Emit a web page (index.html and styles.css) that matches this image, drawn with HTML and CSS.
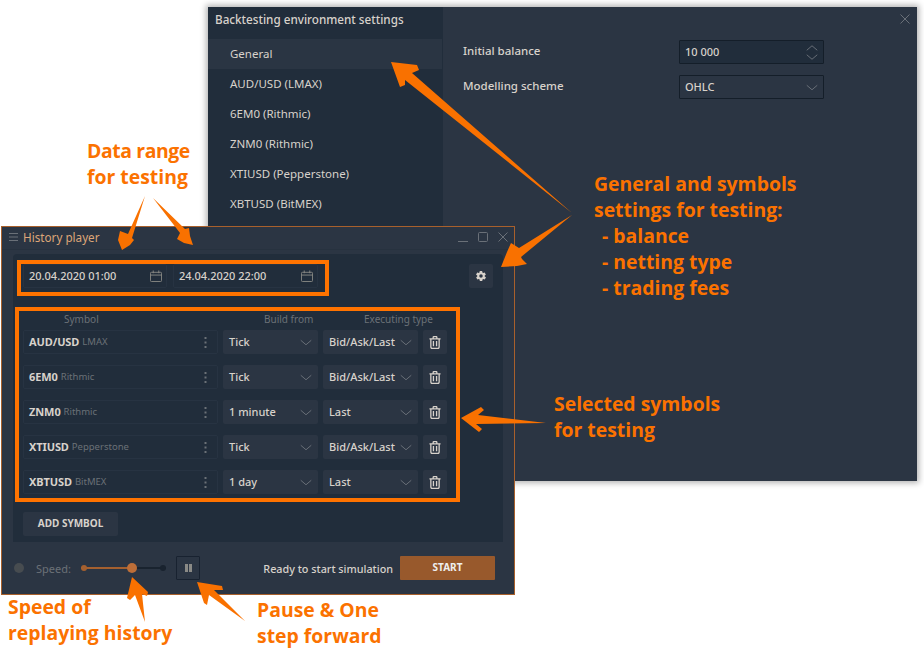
FILE: index.html
```html
<!DOCTYPE html>
<html lang="en">
<head>
  <meta charset="UTF-8" />
  <title>History player</title>
  <link rel="stylesheet" href="styles.css">
</head>
<body>
  <svg class="defs" width="0" height="0">
    <symbol id="chev" viewBox="0 0 16 8"><path d="M1 1l7 6 7-6" fill="none" stroke="currentColor" stroke-width="1.3"/></symbol>
    <symbol id="cal" viewBox="0 0 13 13"><path d="M1.500 2.500h10a1 1 0 0 1 1 1v8a1 1 0 0 1-1 1h-10a1 1 0 0 1-1-1v-8a1 1 0 0 1 1-1zM.5 5.500h12M3.500 .5v3M9.500 .5v3" fill="none" stroke="currentColor"/></symbol>
    <symbol id="trash" viewBox="0 0 13 14"><path d="M.5 3h12M4.500 3V1.500a1 1 0 0 1 1-1h2a1 1 0 0 1 1 1V3M2 3v9a1.500 1.500 0 0 0 1.500 1.500h6A1.500 1.500 0 0 0 11 12V3M4.800 5.500v5.500M8.200 5.500v5.500" fill="none" stroke="currentColor" stroke-width="1.4"/></symbol>
    <symbol id="dots" viewBox="0 0 3 11"><path d="M.5 0h2v2h-2zM.5 4.500h2v2h-2zM.5 9h2v2h-2z" fill="currentColor"/></symbol>
  </svg>

  <div class="desk">

    <!-- settings window -->
    <section class="win settings">
      <aside class="side">
        <h1 class="side-title">Backtesting environment settings</h1>
        <div class="side-item active">General</div>
        <div class="side-item">AUD/USD (LMAX)</div>
        <div class="side-item">6EM0 (Rithmic)</div>
        <div class="side-item">ZNM0 (Rithmic)</div>
        <div class="side-item">XTIUSD (Pepperstone)</div>
        <div class="side-item">XBTUSD (BitMEX)</div>
      </aside>
      <div class="main">
        <svg class="main-close" width="10" height="10" viewBox="0 0 10 10"><path d="M.5 .5l9 9M9.500 .5l-9 9" stroke="currentColor" fill="none"/></svg>
        <div class="field">
          <label class="field-label">Initial balance</label>
          <div class="box filled">10 000
            <span class="spin">
              <svg width="12" height="6" viewBox="0 0 16 8"><path d="M1 7l7-6 7 6" fill="none" stroke="currentColor" stroke-width="1.300"/></svg>
              <svg width="12" height="6"><use href="#chev"/></svg>
            </span>
          </div>
        </div>
        <div class="field">
          <label class="field-label">Modelling scheme</label>
          <div class="box">OHLC <svg class="chev" width="12" height="7"><use href="#chev"/></svg></div>
        </div>
      </div>
    </section>

    <!-- history player window -->
    <section class="win player">
      <header class="titlebar">
        <svg class="burger" width="9" height="8" viewBox="0 0 9 8"><path d="M0 .5h9M0 4h9M0 7.500h9" stroke="currentColor"/></svg>
        <span class="title">History player</span>
        <span class="ctrls">
          <svg width="10" height="10" viewBox="0 0 10 10"><path d="M0 9.500h10" stroke="currentColor"/></svg>
          <svg width="10" height="10" viewBox="0 0 10 10"><rect x=".5" y=".5" width="9" height="9" rx="1" fill="none" stroke="currentColor"/></svg>
          <svg width="10" height="10" viewBox="0 0 10 10"><path d="M.5 .5l9 9M9.500 .5l-9 9" stroke="currentColor" fill="none"/></svg>
        </span>
      </header>

      <div class="panel">
        <div class="dates">
          <div class="date">20.04.2020 01:00 <svg class="cal" width="12" height="12"><use href="#cal"/></svg></div>
          <div class="date date-to">24.04.2020 22:00 <svg class="cal" width="12" height="12"><use href="#cal"/></svg></div>
          <div class="gear">
            <svg width="12" height="12" viewBox="0 0 24 24"><path fill="currentColor" fill-rule="evenodd" d="M19.400 13c.1-.3.100-.7.100-1s0-.7-.1-1l2.100-1.600c.2-.2.200-.4.100-.6l-2-3.500c-.1-.2-.4-.3-.6-.2l-2.500 1c-.5-.4-1.100-.7-1.700-1l-.4-2.700c0-.2-.2-.4-.5-.4h-4c-.3 0-.5.200-.5.400l-.4 2.700c-.6.300-1.200.6-1.700 1l-2.500-1c-.2-.1-.5 0-.6.200l-2 3.500c-.1.200-.1.400.1.600L4.600 11c-.1.300-.1.700-.1 1s0 .7.100 1l-2.100 1.600c-.2.200-.2.400-.1.600l2 3.500c.1.200.4.300.6.200l2.500-1c.5.400 1.100.7 1.700 1l.4 2.700c0 .2.200.4.500.4h4c.3 0 .5-.2.500-.4l.4-2.700c.6-.3 1.200-.6 1.700-1l2.500 1c.2.100.5 0 .6-.2l2-3.500c.1-.2.100-.4-.1-.6zM12 15.500a3.500 3.500 0 1 1 0-7 3.500 3.500 0 0 1 0 7z"/></svg>
          </div>
        </div>

        <div class="grid heads">
          <span class="head">Symbol</span>
          <span class="head">Build from</span>
          <span class="head">Executing type</span>
        </div>

        <div class="grid row">
          <div class="sym"><b>AUD/USD</b><small>LMAX</small><svg class="dots" width="3" height="11"><use href="#dots"/></svg></div>
          <div class="sel">Tick<svg class="chev" width="12" height="7"><use href="#chev"/></svg></div>
          <div class="sel">Bid/Ask/Last<svg class="chev" width="12" height="7"><use href="#chev"/></svg></div>
          <div class="del"><svg width="12" height="13"><use href="#trash"/></svg></div>
        </div>
        <div class="grid row">
          <div class="sym"><b>6EM0</b><small>Rithmic</small><svg class="dots" width="3" height="11"><use href="#dots"/></svg></div>
          <div class="sel">Tick<svg class="chev" width="12" height="7"><use href="#chev"/></svg></div>
          <div class="sel">Bid/Ask/Last<svg class="chev" width="12" height="7"><use href="#chev"/></svg></div>
          <div class="del"><svg width="12" height="13"><use href="#trash"/></svg></div>
        </div>
        <div class="grid row">
          <div class="sym"><b>ZNM0</b><small>Rithmic</small><svg class="dots" width="3" height="11"><use href="#dots"/></svg></div>
          <div class="sel">1 minute<svg class="chev" width="12" height="7"><use href="#chev"/></svg></div>
          <div class="sel">Last<svg class="chev" width="12" height="7"><use href="#chev"/></svg></div>
          <div class="del"><svg width="12" height="13"><use href="#trash"/></svg></div>
        </div>
        <div class="grid row">
          <div class="sym"><b>XTIUSD</b><small>Pepperstone</small><svg class="dots" width="3" height="11"><use href="#dots"/></svg></div>
          <div class="sel">Tick<svg class="chev" width="12" height="7"><use href="#chev"/></svg></div>
          <div class="sel">Bid/Ask/Last<svg class="chev" width="12" height="7"><use href="#chev"/></svg></div>
          <div class="del"><svg width="12" height="13"><use href="#trash"/></svg></div>
        </div>
        <div class="grid row">
          <div class="sym"><b>XBTUSD</b><small>BitMEX</small><svg class="dots" width="3" height="11"><use href="#dots"/></svg></div>
          <div class="sel">1 day<svg class="chev" width="12" height="7"><use href="#chev"/></svg></div>
          <div class="sel">Last<svg class="chev" width="12" height="7"><use href="#chev"/></svg></div>
          <div class="del"><svg width="12" height="13"><use href="#trash"/></svg></div>
        </div>

        <div class="add">ADD SYMBOL</div>
      </div>

      <footer class="bottom">
        <span class="led"></span>
        <span class="speed">Speed:</span>
        <div class="slider"><span class="fill"></span><span class="knob"></span></div>
        <div class="pause"><svg width="7" height="8" viewBox="0 0 7 8"><path d="M0 0h3v8H0zM4 0h3v8H4z" fill="currentColor"/></svg></div>
        <span class="ready">Ready to start simulation</span>
        <div class="start">START</div>
      </footer>
    </section>

    <!-- orange annotations over the windows -->
    <div class="mark mark-dates"></div>
    <div class="mark mark-rows"></div>

    <svg class="arrows" width="924" height="654" viewBox="0 0 924 654">
      <path d="M391 62 417 65 419 70 412 73 572 213 405 80 405 85 400 87Z"/>
      <path d="M572 215 519 248 511 243 507 252 501 267 517 266 527 264 522 259 521 257Z"/>
      <path d="M461 418 481 407 484 410 478 415 546 423 476 424 482 429 479 432Z"/>
      <path d="M145 196 128 234 120 231 118 240 122 250 130 245 134 240 132 238Z"/>
      <path d="M153 198 185 229 189 228 190 236 193 245 184 243 177 239 180 233Z"/>
      <path d="M132 577 148 592 147 596 142 594 145 622 135 595 130 600 127 598Z"/>
      <path d="M197 582 222 586 223 590 214 590 245 621 209 595 207 605 204 603Z"/>
    </svg>

    <div class="note note-range"><span class="tight">Data range</span><br>for testing</div>
    <div class="note note-general">General and symbols<br>settings for testing:<br><span class="dash">- balance</span><br><span class="dash">- netting type</span><br><span class="dash">- trading fees</span></div>
    <div class="note note-selected">Selected symbols<br>for testing</div>
    <div class="note note-speed">Speed of<br>replaying history</div>
    <div class="note note-pause">Pause &amp; One<br>step forward</div>
  </div>
</body>
</html>
```

FILE: styles.css
```css
* { box-sizing: border-box; }
body { margin: 0; background: #fff; font-family: "Noto Sans", "Open Sans", sans-serif; font-size: 11px; color: #d8d2cb; }
.defs { position: absolute; }
.desk { position: relative; width: 924px; height: 654px; overflow: hidden; background: #fff; }
.win { position: absolute; display: flex; }

/* settings */
.settings { left: 208px; top: 7px; width: 709px; height: 474px; background: #2b3543; box-shadow: 0 0 6px 2px rgba(0,0,0,.3); }
.side { width: 235px; background: #212d3b; flex: none; }
.side-title { margin: 0; height: 32px; padding: 4px 7px; font-size: 11.700px; font-weight: 500; line-height: 16px; color: #d8d2cb; }
.side-item { height: 30px; line-height: 30px; padding-left: 22px; font-size: 11.500px; }
.side-item.active { background: #2a3543; margin-right: 1px; }
.main { flex: 1; position: relative; padding: 33px 20px; }
.main-close { position: absolute; top: 7px; right: 7px; color: #6a7078; }
.field { display: flex; align-items: center; margin-bottom: 11px; }
.field-label { width: 216px; font-size: 11.500px; font-weight: 500; position: relative; top: -2px; }
.box { width: 145px; height: 24px; border: 1px solid #141e29; border-radius: 1px; padding: 0 5px 2px; display: flex; align-items: center; justify-content: space-between; font-size: 11px; font-weight: 500; line-height: 13px; color: #d8d2cb; }
.box.filled { background: #212d3b; }
.spin { display: flex; flex-direction: column; gap: 3px; color: #6a7078; margin-top: 2px; }
.spin svg { display: block; }
.chev { color: #6a7078; flex: none; margin-top: 2px; }

/* history player */
.player { left: 1px; top: 226px; width: 514px; height: 369px; background: #2b3543; border: 1px solid #a8602c; flex-direction: column; }
.titlebar { height: 23px; flex: none; display: flex; align-items: center; padding: 0 6px 2px 7px; border-bottom: 1px solid #27323f; }
.burger { color: #6a7078; margin-right: 5px; }
.title { color: #dda678; font-size: 11.700px; }
.ctrls { margin-left: auto; display: flex; gap: 10px; color: #6a7078; }
.panel { margin: 4px 11px 0 11px; height: 288px; background: #212d3b; border-radius: 4px 4px 0 0; padding: 10px 10px 0; flex: none; }
.dates { display: flex; gap: 6px; height: 24px; }
.date { flex: none; width: 144px; height: 24px; border: 1px solid #273342; border-radius: 2px; padding: 0 4px 2px 5px; display: flex; align-items: center; justify-content: space-between; font-weight: 500; line-height: 13px; }
.date-to { width: 145px; }
.date .cal { color: #8a8a86; margin-top: 2px; }
.gear { margin-left: auto; flex: none; width: 24px; height: 24px; background: #2b3543; border-radius: 2px; display: flex; align-items: center; justify-content: center; color: #d8d2cb; }
.grid { display: grid; grid-template-columns: 195px 95px 95px 24px; column-gap: 5px; }
.heads { margin-top: 24px; height: 18px; line-height: 14px; font-size: 10px; color: #6b7177; }
.head { padding-left: 41px; white-space: nowrap; }
.row { height: 24px; margin-bottom: 11px; }
.sym { border: 1px solid #273342; border-radius: 2px; padding: 0 10px 2px 5px; display: flex; align-items: center; gap: 3px; white-space: pre; line-height: 13px; }
.sym b { font-weight: 700; letter-spacing: -.1px; }
.sym small { font-size: 9.500px; color: #6b7177; margin-top: 1px; }
.sym .dots { margin-left: auto; margin-top: 2px; color: #6b7177; }
.sel { background: #2b3543; border-radius: 2px; padding: 0 6px 2px; display: flex; align-items: center; justify-content: space-between; font-weight: 500; line-height: 13px; }
.del { background: #2b3543; border-radius: 2px; display: flex; align-items: center; justify-content: center; color: #d8d2cb; }
.add { margin-top: 18px; width: 95px; height: 24px; background: #2b3543; border-radius: 2px; line-height: 23px; text-align: center; font-size: 10px; font-weight: 700; }
.bottom { flex: 1; display: flex; align-items: center; padding: 0 19px 0 12px; }
.led { width: 10px; height: 10px; border-radius: 50%; background: #474c50; flex: none; }
.speed { margin-left: 12px; width: 45px; color: #6b7177; }
.slider { position: relative; width: 85px; height: 2px; background: #19232f; flex: none; }
.slider::before, .slider::after { content: ""; position: absolute; top: -2px; width: 6px; height: 6px; border-radius: 50%; }
.slider::before { left: 0; background: #a5602f; }
.slider::after { right: 0; background: #19232f; }
.fill { position: absolute; left: 0; top: 0; width: 51px; height: 2px; background: #a5602f; }
.knob { position: absolute; left: 46px; top: -4px; width: 10px; height: 10px; border-radius: 50%; background: #bd6e38; }
.pause { margin-left: 10px; width: 24px; height: 24px; border: 1px solid #182230; border-radius: 1px; display: flex; align-items: center; justify-content: center; color: #8a8a86; flex: none; }
.ready { margin-left: auto; font-weight: 500; font-size: 10.800px; }
.start { margin-left: 7px; width: 95px; height: 24px; background: #98592c; border-radius: 1px; line-height: 23px; text-align: center; font-size: 10px; font-weight: 700; color: #eee; }

/* annotations */
.mark { position: absolute; border: 4px solid #ff7300; }
.mark-dates { left: 17px; top: 260px; width: 312px; height: 36px; }
.mark-rows { left: 15px; top: 307px; width: 445px; height: 195px; }
.arrows { position: absolute; left: 0; top: 0; }
.arrows path { fill: #f97100; }
.note { position: absolute; font-family: "Open Sans", "Noto Sans", sans-serif; font-weight: 700; font-size: 19.400px; line-height: 26px; color: #fb7200; white-space: nowrap; }
.tight { letter-spacing: -.4px; }
.dash { padding-left: 8px; }
.note-range { left: 87px; top: 138px; }
.note-general { left: 594px; top: 171px; }
.note-selected { left: 554px; top: 391px; }
.note-speed { left: 8px; top: 594px; }
.note-pause { left: 257px; top: 597px; }
```
